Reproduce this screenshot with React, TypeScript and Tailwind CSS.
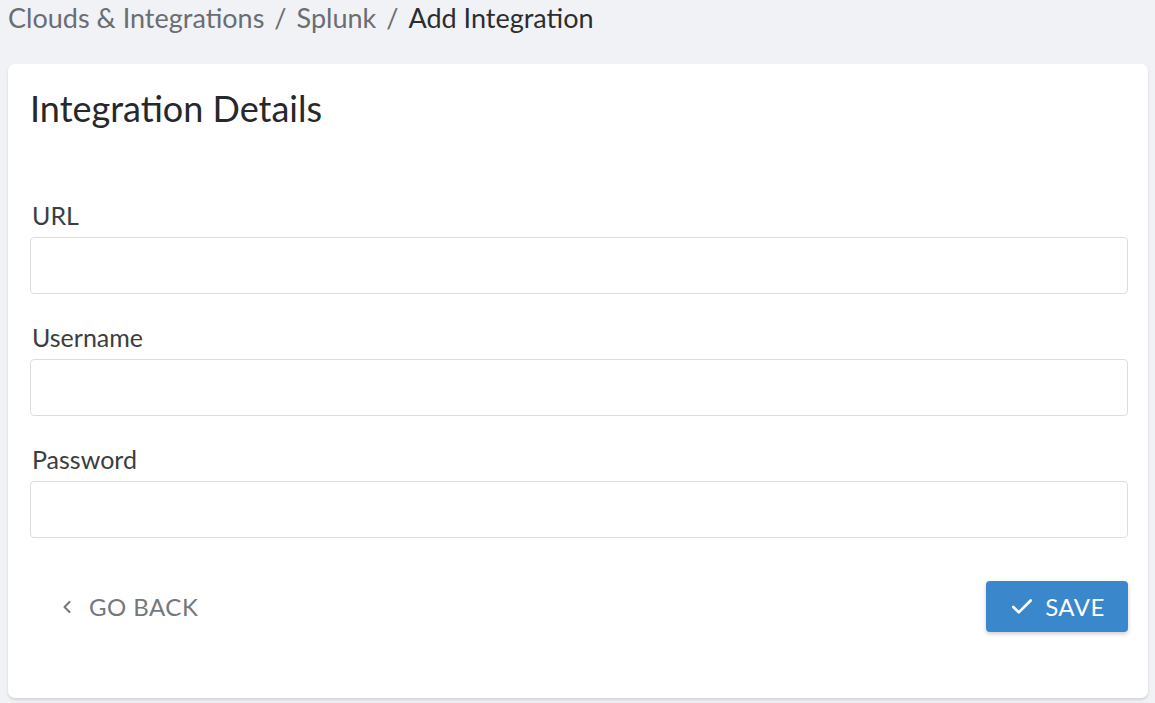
import { Check, ChevronLeft } from 'lucide-react'

function Field({ label, type = 'text' }: { label: string; type?: string }) {
  return (
    <div className="flex flex-col">
      <label className="mb-[5px] pl-[2px] text-[25px] leading-[34px] text-[#3b3d40]">{label}</label>
      <input
        type={type}
        className="h-[57px] w-full rounded-[4px] border border-[#dcdde0] bg-white px-3 text-[18px] outline-none"
      />
    </div>
  )
}

export default function App() {
  return (
    <div className="min-h-[703px] bg-[#f1f2f6] pl-[8px] pr-[7px] font-['Lato','Noto_Sans',sans-serif]">
      <nav className="flex h-[64px] items-start text-[27px] leading-[36px] text-[#6a6d72]">
        <span>Clouds &amp; Integrations</span>
        <span className="mx-[10px]">/</span>
        <span>Splunk</span>
        <span className="mx-[10px]">/</span>
        <span className="text-[#2b2d30]">Add Integration</span>
      </nav>

      <section className="rounded-[7px] bg-white pb-[66px] pl-[22px] pr-[20px] pt-[22px] shadow-[0_2px_3px_rgba(0,0,0,0.12)]">
        <h1 className="text-[36px] leading-[44px] text-[#26282b]">Integration Details</h1>

        <div className="mt-[68px] flex flex-col gap-[26px]">
          <Field label="URL" />
          <Field label="Username" />
          <Field label="Password" type="password" />
        </div>

        <div className="mt-[43px] flex items-center justify-between">
          <button className="flex items-center gap-[12px] pl-[27px] text-[24px] uppercase tracking-[0.02em] text-[#74787d]">
            <ChevronLeft size={20} strokeWidth={2.5} />
            Go Back
          </button>
          <button className="flex h-[51px] w-[142px] items-center justify-center gap-[10px] rounded-[4px] bg-[#3a87cc] text-[24px] uppercase tracking-[0.02em] text-white shadow-[0_2px_4px_rgba(0,0,0,0.2)]">
            <Check size={26} strokeWidth={2.5} />
            Save
          </button>
        </div>
      </section>
    </div>
  )
}
